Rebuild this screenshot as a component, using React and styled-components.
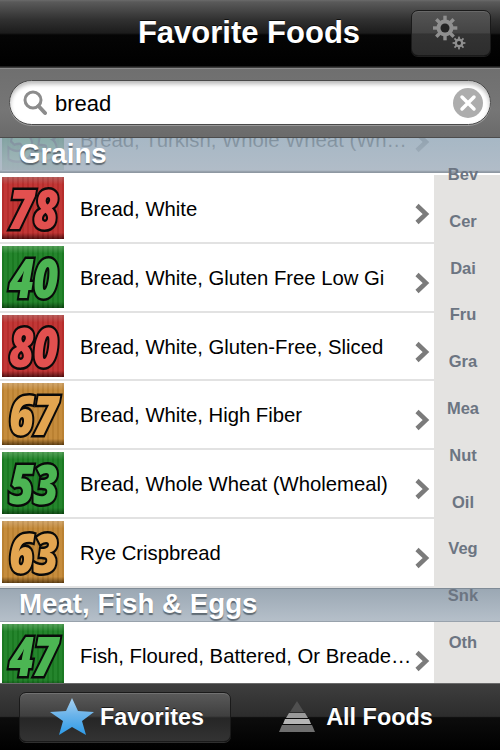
import React from 'react';
import styled, { createGlobalStyle } from 'styled-components';

const GlobalStyle = createGlobalStyle`
  html, body, #root {
    margin: 0;
    padding: 0;
    width: 500px;
    height: 750px;
    overflow: hidden;
  }
  body {
    font-family: "Liberation Sans", Arial, sans-serif;
    background: #000;
  }
`;

const Phone = styled.div`
  width: 500px;
  height: 750px;
  display: flex;
  flex-direction: column;
  overflow: hidden;
`;

const NavBar = styled.header`
  flex: 0 0 68px;
  box-sizing: border-box;
  display: flex;
  align-items: center;
  justify-content: flex-end;
  padding: 0 9px 2px 0;
  position: relative;
  background: linear-gradient(#6b6b6b 0, #5a5a5a 2px, #303030 20px, #1c1c1c 33px, #050505 35px, #000 66px, #3c3c3c 67px);
`;

const NavTitle = styled.h1`
  position: absolute;
  left: -2px;
  right: 0;
  top: 14px;
  margin: 0;
  text-align: center;
  color: #fff;
  font-size: 31px;
  line-height: 38px;
  font-weight: 700;
  text-shadow: 0 -1px 0 rgba(0, 0, 0, 0.7);
`;

const GearButton = styled.button`
  width: 80px;
  height: 46px;
  padding: 0;
  display: flex;
  align-items: center;
  justify-content: center;
  border: 1px solid #1a1a1a;
  border-radius: 7px;
  background: linear-gradient(#555 0, #444 50%, #333 52%, #2d2d2d 100%);
  box-shadow: inset 0 1px 0 rgba(255, 255, 255, 0.12), 0 1px 0 rgba(255, 255, 255, 0.12);
`;

const SearchBar = styled.div`
  flex: 0 0 69px;
  box-sizing: border-box;
  padding: 11px 9px 12px;
  background: linear-gradient(#6f6f6f, #767676 60%, #6a6a6a);
  border-top: 1px solid #8a8a8a;
  border-bottom: 1px solid #4c4c4c;
`;

const SearchField = styled.div`
  height: 45px;
  box-sizing: border-box;
  display: flex;
  align-items: center;
  padding: 0 7px 0 13px;
  border-radius: 23px;
  background: #fff;
  border: 1px solid #4a4a4a;
  box-shadow: inset 0 3px 4px rgba(0, 0, 0, 0.28), 0 1px 0 rgba(255, 255, 255, 0.3);
`;

const SearchText = styled.span`
  flex: 1;
  margin-left: 8px;
  padding-top: 2px;
  font-size: 22px;
  color: #000;
`;

const ClearButton = styled.span`
  width: 30px;
  height: 30px;
  border-radius: 50%;
  background: #adadad;
  display: flex;
  align-items: center;
  justify-content: center;
`;

const List = styled.main`
  flex: 1;
  min-height: 0;
  position: relative;
  overflow: hidden;
  background: #fff;
`;

const SectionHeader = styled.div`
  position: relative;
  height: ${(p) => p.$height}px;
  box-sizing: border-box;
  overflow: hidden;
  padding-left: 19px;
  ${(p) => (p.$pinned
    ? 'background: #fff; border-bottom: 2px solid #fff;'
    : 'background: linear-gradient(#9aa7b3, #b6c0ca); box-shadow: inset 0 1px 0 #7f8b96, inset 0 -1px 0 #98a2ac;')}
`;

const SectionTint = styled.div`
  position: absolute;
  inset: 0;
  background: linear-gradient(rgba(150, 170, 186, 0.84), rgba(172, 184, 196, 0.94) 92%, #8e98a2 97%);
`;

const SectionTitle = styled.span`
  position: relative;
  display: block;
  color: #fff;
  font-size: 27.7px;
  line-height: 31px;
  font-weight: 700;
  text-shadow: 0 2px 1px rgba(70, 80, 90, 0.75);
`;

const GhostRow = styled.div`
  position: absolute;
  left: 0;
  right: 0;
  top: -32px;
  height: 68px;
  display: flex;
  align-items: flex-start;
  background: #fff;
`;

const Row = styled.div`
  display: flex;
  height: 68.8px;
  background: #e4e3e1;
`;

const RowBody = styled.div`
  flex: 0 0 434px;
  box-sizing: border-box;
  display: flex;
  align-items: flex-start;
  background: #fff;
  border-bottom: 2px solid #e2e2e2;
`;

const Tile = styled.div`
  flex: 0 0 62px;
  height: 62px;
  margin: 2px 0 0 2px;
  box-sizing: border-box;
  display: flex;
  align-items: center;
  justify-content: center;
  background:
    repeating-linear-gradient(90deg, rgba(0, 0, 0, 0.05) 0 2px, rgba(255, 255, 255, 0.04) 2px 5px),
    linear-gradient(${(p) => p.$c.light}, ${(p) => p.$c.mid} 12%, ${(p) => p.$c.mid} 90%, ${(p) => p.$c.dark});
`;

const TileNumber = styled.span`
  display: inline-block;
  font-family: "Open Sans", "Liberation Sans", sans-serif;
  font-size: 54px;
  line-height: 56px;
  font-weight: 800;
  font-style: italic;
  letter-spacing: -1px;
  color: ${(p) => p.$c.text};
  -webkit-text-stroke: 5px #0a0a0a;
  paint-order: stroke fill;
  transform: scaleX(0.8);
`;

const RowLabel = styled.span`
  flex: 0 0 334px;
  margin-left: 16px;
  font-size: 20.3px;
  line-height: 24px;
  padding-top: 22px;
  color: #000;
  white-space: nowrap;
`;

const Chevron = styled.span`
  display: flex;
  margin-top: 27px;
`;

const GhostChevron = styled(Chevron)`
  margin-top: 24px;
`;

const IndexColumn = styled.nav`
  position: absolute;
  top: 25px;
  right: 8px;
  width: 58px;
  display: flex;
  flex-direction: column;
  align-items: center;
`;

const IndexLabel = styled.span`
  height: 46.8px;
  padding-top: 1px;
  box-sizing: border-box;
  color: #6c7582;
  font-size: 16.5px;
  line-height: 20px;
  font-weight: 700;
`;

const TabBar = styled.footer`
  flex: 0 0 67px;
  box-sizing: border-box;
  display: grid;
  grid-template-columns: 250px 250px;
  align-items: center;
  border-top: 1px solid #6a6a6a;
  background: linear-gradient(#3e3e3e, #2c2c2c 49%, #0c0c0c 51%, #000);
`;

const TabButton = styled.div`
  height: 50px;
  box-sizing: border-box;
  display: flex;
  align-items: center;
  justify-content: center;
  gap: ${(p) => (p.$active ? 5 : 10)}px;
  margin: 0 ${(p) => (p.$active ? '19px' : '0')};
  padding: ${(p) => (p.$active ? '0 0 0 3px' : '0 39px 0 0')};
  border-radius: 7px;
  ${(p) => p.$active && `
    background: linear-gradient(#5a5a5a, #3f3f3f 48%, #262626 52%, #333);
    border: 1px solid #1a1a1a;
    box-shadow: inset 0 1px 0 rgba(255, 255, 255, 0.15), 0 1px 0 rgba(255, 255, 255, 0.18);
  `}
`;

const TabLabel = styled.span`
  color: #fff;
  font-size: 23.4px;
  font-weight: 700;
  text-shadow: 0 -1px 0 rgba(0, 0, 0, 0.6);
`;

const palettes = {
  red: { light: '#b85a58', mid: '#bf2f2e', dark: '#4d0d0d', text: '#e2504f' },
  green: { light: '#4f9e54', mid: '#1c8024', dark: '#0a440e', text: '#4cb553' },
  orange: { light: '#d0a468', mid: '#c48835', dark: '#5a3a0f', text: '#e3a550' },
};

const grains = [
  { gi: 78, tone: 'red', name: 'Bread, White' },
  { gi: 40, tone: 'green', name: 'Bread, White, Gluten Free Low Gi' },
  { gi: 80, tone: 'red', name: 'Bread, White, Gluten-Free, Sliced' },
  { gi: 67, tone: 'orange', name: 'Bread, White, High Fiber' },
  { gi: 53, tone: 'green', name: 'Bread, Whole Wheat (Wholemeal)' },
  { gi: 63, tone: 'orange', name: 'Rye Crispbread' },
];

const indexLabels = ['Bev', 'Cer', 'Dai', 'Fru', 'Gra', 'Mea', 'Nut', 'Oil', 'Veg', 'Snk', 'Oth'];

function ChevronIcon() {
  return (
    <svg width="16" height="24" viewBox="0 0 16 24">
      <path d="M3 3.5 L12 12 L3 20.5" fill="none" stroke="#7b7b7b" strokeWidth="4.5" />
    </svg>
  );
}

function Gear({ x, y, r, hole }) {
  return (
    <g transform={`translate(${x} ${y})`}>
      {[0, 45, 90, 135].map((angle) => (
        <rect
          key={angle}
          x={-r * 0.2}
          y={-r * 1.45}
          width={r * 0.4}
          height={r * 2.9}
          fill="#8f8f8f"
          transform={`rotate(${angle})`}
        />
      ))}
      <circle r={r} fill="#8f8f8f" />
      <circle r={hole} fill="#242424" />
    </g>
  );
}

function GearIcon() {
  return (
    <svg width="36" height="36" viewBox="0 0 36 36">
      <Gear x={12} y={13} r={8.5} hole={4.5} />
      <Gear x={26} y={28} r={4.4} hole={2} />
    </svg>
  );
}

function SearchIcon() {
  return (
    <svg width="24" height="26" viewBox="0 0 24 26">
      <circle cx="10" cy="10" r="8" fill="none" stroke="#8c8c8c" strokeWidth="3" />
      <path d="M15.5 16 L22 23" stroke="#8c8c8c" strokeWidth="4" strokeLinecap="round" />
    </svg>
  );
}

function StarIcon() {
  return (
    <svg width="46" height="38" viewBox="0 0 46 38">
      <defs>
        <linearGradient id="star" x1="0" y1="0" x2="0" y2="1">
          <stop offset="0" stopColor="#a9d3f2" />
          <stop offset="0.45" stopColor="#6cb4ea" />
          <stop offset="1" stopColor="#2d9be8" />
        </linearGradient>
      </defs>
      <polygon points="23,0 29,13 45,14 33,23 37,37 23,29 10,37 14,23 1,14 17,13" fill="url(#star)" />
    </svg>
  );
}

function PyramidIcon() {
  return (
    <svg width="38" height="34" viewBox="0 0 38 34">
      <polygon points="19,1 26,12 12,12" fill="#4f4f4f" />
      <polygon points="11,13 27,13 30,18 8,18" fill="#9a9a9a" />
      <polygon points="7,19 31,19 33,24 5,24" fill="#b5b5b5" />
      <polygon points="4,25 34,25 37,32 1,32" fill="#6f6f6f" />
    </svg>
  );
}

function GiTile({ gi, tone }) {
  const c = palettes[tone];
  return (
    <Tile $c={c}>
      <TileNumber $c={c}>{gi}</TileNumber>
    </Tile>
  );
}

function FoodRow({ gi, tone, name }) {
  return (
    <Row>
      <RowBody>
        <GiTile gi={gi} tone={tone} />
        <RowLabel>{name}</RowLabel>
        <Chevron>
          <ChevronIcon />
        </Chevron>
      </RowBody>
    </Row>
  );
}

export default function App() {
  return (
    <>
      <GlobalStyle />
      <Phone>
        <NavBar>
          <NavTitle>Favorite Foods</NavTitle>
          <GearButton aria-label="Settings">
            <GearIcon />
          </GearButton>
        </NavBar>
        <SearchBar>
          <SearchField>
            <SearchIcon />
            <SearchText>bread</SearchText>
            <ClearButton>
              <svg width="18" height="18" viewBox="0 0 18 18">
                <path d="M3 3 L15 15 M15 3 L3 15" stroke="#fff" strokeWidth="3.5" strokeLinecap="round" />
              </svg>
            </ClearButton>
          </SearchField>
        </SearchBar>
        <List>
          <SectionHeader $pinned $height={37}>
            <GhostRow>
              <GiTile gi={53} tone="green" />
              <RowLabel>Bread, Turkish, Whole Wheat (Wh…</RowLabel>
              <GhostChevron>
                <ChevronIcon />
              </GhostChevron>
            </GhostRow>
            <SectionTint />
            <SectionTitle>Grains</SectionTitle>
          </SectionHeader>
          {grains.map((food) => (
            <FoodRow key={food.name} {...food} />
          ))}
          <SectionHeader $height={34}>
            <SectionTitle>Meat, Fish &amp; Eggs</SectionTitle>
          </SectionHeader>
          <FoodRow gi={47} tone="green" name="Fish, Floured, Battered, Or Breade…" />
          <IndexColumn>
            {indexLabels.map((label) => (
              <IndexLabel key={label}>{label}</IndexLabel>
            ))}
          </IndexColumn>
        </List>
        <TabBar>
          <TabButton $active>
            <StarIcon />
            <TabLabel>Favorites</TabLabel>
          </TabButton>
          <TabButton>
            <PyramidIcon />
            <TabLabel>All Foods</TabLabel>
          </TabButton>
        </TabBar>
      </Phone>
    </>
  );
}
